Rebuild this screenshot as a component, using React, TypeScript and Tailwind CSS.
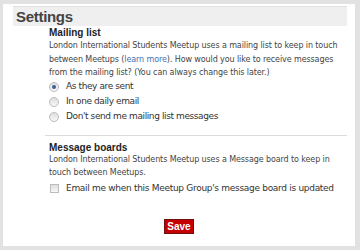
import React from "react";

const Radio = ({ checked, label }: { checked?: boolean; label: string }) => (
  <label className="flex items-center gap-[7px] h-[15px]">
    <span className="w-[10px] h-[10px] rounded-full border border-[#bcbcbc] bg-gradient-to-b from-[#dedede] to-[#f8f8f8] flex items-center justify-center">
      {checked && <span className="w-[4px] h-[4px] rounded-full bg-[#3d5f93]" />}
    </span>
    <span>{label}</span>
  </label>
);

export default function App() {
  return (
    <div className="w-[360px] h-[250px] bg-[#e2e2e2] pt-[4px] pl-[3px] pr-[5px] pb-[4px]">
      <div className="h-full bg-white pt-[2px] pl-[10px] pr-[8px] text-[#333]">
        <div className="h-[20px] bg-[#efefef] border-t border-[#e2e2e2] flex items-center pl-[3px]">
          <h1 className="font-['Liberation_Sans',Arial,sans-serif] font-bold text-[15px] tracking-[-0.3px] text-[#444] leading-none">
            Settings
          </h1>
        </div>
        <div className="pl-[36px] pt-[1px] font-['DejaVu_Sans',sans-serif]">
          <h2 className="font-bold text-[10px] leading-[12px] font-['Liberation_Sans',Arial,sans-serif] text-[#222]">
            Mailing list
          </h2>
          <p className="text-[8px] leading-[13.5px] tracking-[-0.1px] text-[#444]">
            London International Students Meetup uses a mailing list to keep in touch between Meetups (
            <a className="text-[#3b73b9]">learn more</a>). How would you like to receive messages from the
            mailing list? (You can always change this later.)
          </p>
          <div className="flex flex-col text-[9px] tracking-[-0.4px]">
            <Radio checked label="As they are sent" />
            <Radio label="In one daily email" />
            <Radio label="Don't send me mailing list messages" />
          </div>
        </div>
        <div className="mt-[10px] ml-[32px] border-b border-[#dcdcdc]" />
        <div className="pl-[36px] pt-[6px] font-['DejaVu_Sans',sans-serif]">
          <h2 className="font-bold text-[10px] leading-[11px] font-['Liberation_Sans',Arial,sans-serif] text-[#222]">
            Message boards
          </h2>
          <p className="text-[8px] leading-[13.5px] tracking-[-0.1px] text-[#444]">
            London International Students Meetup uses a Message board to keep in touch between Meetups.
          </p>
          <label className="mt-[1px] pl-[1px] flex items-center gap-[7px] text-[9px] tracking-[-0.3px] h-[16px]">
            <span className="w-[9px] h-[9px] border border-[#bcbcbc] bg-gradient-to-b from-[#dedede] to-[#f8f8f8]" />
            <span>Email me when this Meetup Group's message board is updated</span>
          </label>
        </div>
        <div className="mt-[22px] flex justify-center pr-[2px]">
          <button className="bg-[#c40000] border border-[#6e1010] text-white font-bold text-[10px] font-['Liberation_Sans',Arial,sans-serif] px-[2px] h-[15px] leading-[13px]">
            Save
          </button>
        </div>
      </div>
    </div>
  );
}
